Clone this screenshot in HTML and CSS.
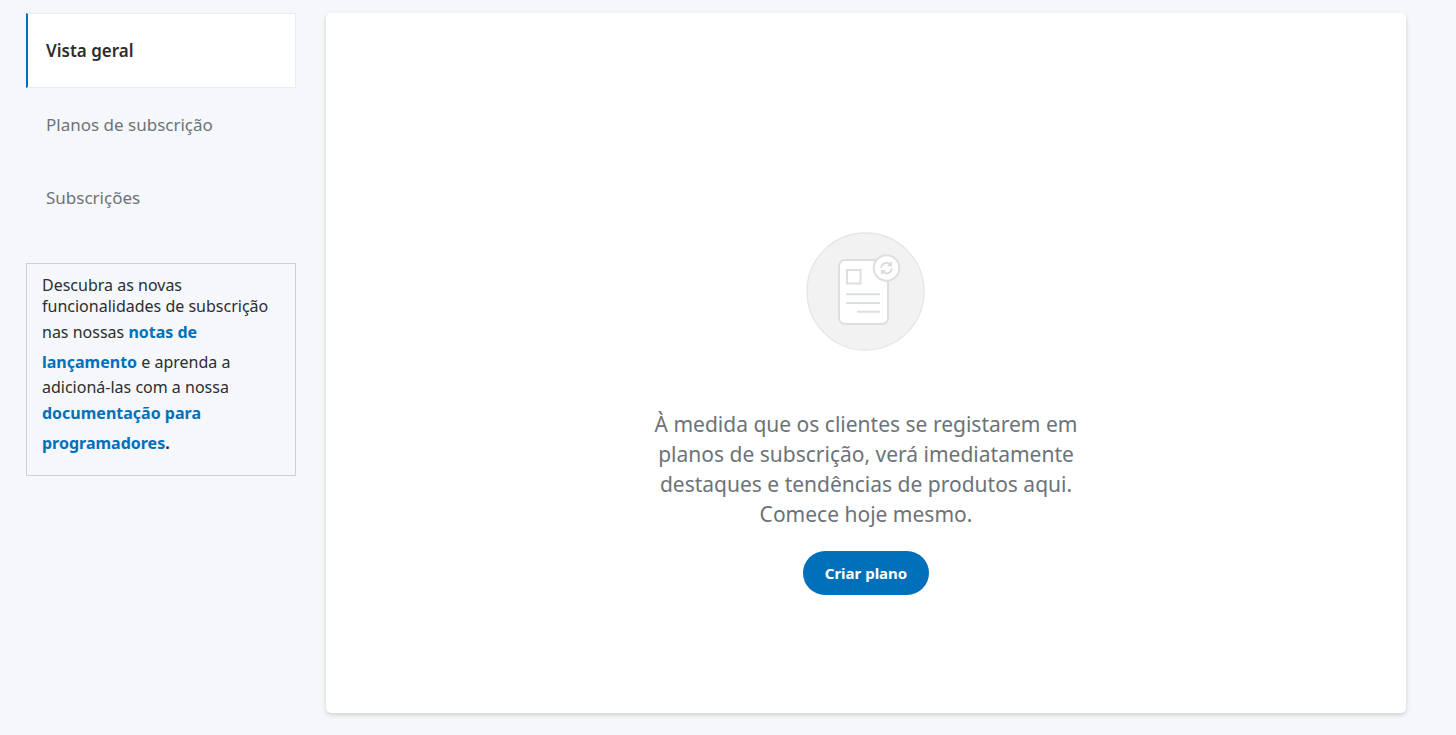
FILE: index.html
```html
<!DOCTYPE html>
<html lang="pt">
<head>
  <meta charset="UTF-8" />
  <meta name="viewport" content="width=device-width, initial-scale=1.0"/>
  <title>Subscrições</title>
  <link rel="stylesheet" href="styles.css">
</head>
<body>
  <div class="page">
    <aside class="sidebar">
      <nav class="menu">
        <a class="menu-item active" href="#vista-geral" aria-current="page">Vista geral</a>
        <a class="menu-item" href="#planos">Planos de subscrição</a>
        <a class="menu-item" href="#subscricoes">Subscrições</a>
      </nav>

      <p class="notice">
        Descubra as novas funcionalidades de subscrição nas nossas
        <a href="#notas">notas de lançamento</a> e aprenda a
        adicioná-las com a nossa
        <a href="#documentacao">documentação para programadores</a><strong>.</strong>
      </p>
    </aside>

    <main class="card">
      <svg class="empty-icon" viewBox="0 0 120 120" fill="none" aria-hidden="true">
        <circle cx="59.5" cy="59.5" r="58.5" fill="#f2f2f2" stroke="#e4e5e5" stroke-width="1.3"/>
        <g stroke="#dcdfdf" stroke-width="2">
          <rect x="33" y="28" width="49" height="64" rx="6" fill="#fff"/>
          <rect x="41" y="38" width="13.5" height="13.5"/>
          <path d="M40 62.3h34M40 71h34M51 79.7h23"/>
          <circle cx="80.5" cy="36" r="12.8" fill="#fff"/>
        </g>
        <!-- refresh arrows -->
        <g stroke="#d9dcdc" stroke-width="1.8">
          <path d="M75.2 35.8a5.3 5.3 0 0 1 9.4-3M85.8 36.4a5.3 5.3 0 0 1-9.4 3"/>
          <path d="M85.2 30v3.4h-3.6M75.8 42.2v-3.4h3.6"/>
        </g>
      </svg>
      <p class="empty-text">À medida que os clientes se registarem em planos de subscrição, verá imediatamente destaques e tendências de produtos aqui. Comece hoje mesmo.</p>
      <button class="btn" type="button">Criar plano</button>
    </main>
  </div>
</body>
</html>
```

FILE: styles.css
```css
* {
  box-sizing: border-box;
}

body {
  margin: 0;
  background-color: #f5f7fb;
  color: #2c2e2f;
  font-family: "Noto Sans", "Open Sans", sans-serif;
  font-size: 16px;
}

.page {
  display: flex;
  gap: 30px;
  min-height: 100vh;
  padding: 13px 50px 22px 26px;
}

/* Sidebar */
.sidebar {
  flex: 0 0 270px;
}

.menu {
  display: flex;
  flex-direction: column;
  margin-bottom: 29px;
}

.menu-item {
  padding: 24px 18px;
  border: 1px solid transparent;
  border-left-width: 2px;
  color: #6c7378;
  font-size: 17px;
  line-height: 23px;
  text-decoration: none;
}

.menu-item.active {
  padding: 25px 18px;
  background-color: #fff;
  border-color: #eaeced;
  border-left-color: #0070ba;
  color: #2c2e2f;
  font-weight: 600;
}

.notice {
  margin: 0;
  padding: 11px 15px 17px;
  border: 1px solid #cbd2d6;
  line-height: 21px;
}

.notice a {
  color: #0070ba;
  font-weight: 700;
  line-height: 30px;
  text-decoration: none;
}

/* Main card */
.card {
  flex: 1;
  display: flex;
  flex-direction: column;
  align-items: center;
  padding: 219px 20px 60px;
  background-color: #fff;
  border-radius: 5px;
  box-shadow: 0 2px 5px rgba(0, 0, 0, 0.16);
}

.empty-icon {
  width: 120px;
  height: 120px;
}

.empty-text {
  max-width: 450px;
  margin: 57px 0 22px;
  color: #6c7378;
  font-size: 21px;
  line-height: 30px;
  text-align: center;
}

.btn {
  padding: 11px 22px;
  border: none;
  border-radius: 22px;
  background-color: #0070ba;
  color: #fff;
  font-family: inherit;
  font-size: 15px;
  font-weight: 700;
  line-height: 22px;
  cursor: pointer;
}
```
